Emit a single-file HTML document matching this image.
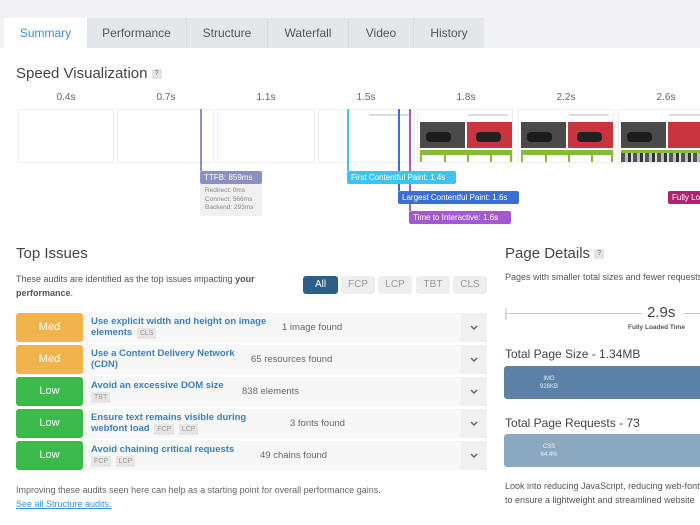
<!DOCTYPE html>
<html><head><meta charset="utf-8"><style>
*{margin:0;padding:0;box-sizing:border-box}
body{width:700px;height:525px;overflow:hidden;background:#fff;font-family:"Liberation Sans",sans-serif;color:#444;position:relative}
.a{position:absolute}
.tabbar{left:0;top:0;width:700px;height:48px;background:#f3f3f5}
.tab{top:18px;height:30px;background:#e4e7ea;font-size:12px;color:#555;text-align:center;line-height:30px;border-right:1px solid #d8dbde}
.frame{top:109px;height:54px;border:1px solid #eee;background:#fff}
.tl{top:92px;font-size:10px;color:#666;transform:translateX(-50%)}
.vl{width:2px}
.lbl{height:13px;font-size:8px;color:#fff;line-height:13px;padding:0 4px;white-space:nowrap;border-radius:2px;overflow:hidden}
.h2{font-size:15px;color:#444}
.btn{top:276px;height:18px;width:34px;background:#eeeeef;font-size:10px;color:#999;text-align:center;line-height:18px;border-radius:3px}
.row{left:16px;width:471px;height:29px;background:#f8f7f8}
.badge{left:0;top:0;width:67px;height:29px;color:#fff;font-size:11px;text-align:center;line-height:29px;border-radius:3px}
.med{background:#f1b44c}.low{background:#3cb94b}
.tt{left:75px;top:3px;font-size:9.5px;font-weight:bold;color:#3a80bd;line-height:11px;width:178px}
.tag{display:inline-block;background:#e6e6e6;color:#999;font-size:7px;font-weight:normal;padding:1px 3px;margin-left:2px;line-height:9px}
.cnt{top:9px;font-size:9.5px;color:#666}
.chev{right:0;top:0;width:26px;height:29px;background:#f1f0f1}
.chev svg{position:absolute;left:9px;top:12px}
.thumb{height:54px;overflow:hidden}
</style></head><body>
<div class="a tabbar"></div>
<div class="a tab" style="left:4px;width:83px;background:#fff;color:#3a8fd0;border:none">Summary</div>
<div class="a tab" style="left:87px;width:100px">Performance</div>
<div class="a tab" style="left:187px;width:81px">Structure</div>
<div class="a tab" style="left:268px;width:81px">Waterfall</div>
<div class="a tab" style="left:349px;width:65px">Video</div>
<div class="a tab" style="left:414px;width:70px;border:none">History</div>

<div class="a" style="left:16px;top:65px;font-size:15px;color:#444">Speed Visualization <span style="display:inline-block;background:#e4e4e4;color:#666;font-size:7px;width:10px;height:10px;line-height:10px;text-align:center;vertical-align:middle">?</span></div>

<div class="a tl" style="left:66px">0.4s</div>
<div class="a tl" style="left:166px">0.7s</div>
<div class="a tl" style="left:266px">1.1s</div>
<div class="a tl" style="left:366px">1.5s</div>
<div class="a tl" style="left:466px">1.8s</div>
<div class="a tl" style="left:566px">2.2s</div>
<div class="a tl" style="left:666px">2.6s</div>

<div class="a frame" style="left:18px;width:96px"></div>
<div class="a frame" style="left:117px;width:97px"></div>
<div class="a frame" style="left:217px;width:98px"></div>
<div class="a frame" style="left:318px;width:97px"><div class="a" style="left:50px;top:4px;width:40px;height:2px;background:#ddd"></div></div>

<div class="a frame thumb" style="left:417px;width:96px">
 <div class="a" style="left:50px;top:4px;width:40px;height:2px;background:#ddd"></div>
 <div class="a" style="left:2px;top:12px;width:45px;height:26px;background:#4a4a4a"></div>
 <div class="a" style="left:49px;top:12px;width:45px;height:26px;background:#c8353f"></div>
 <div class="a" style="left:8px;top:22px;width:25px;height:10px;background:#1c1c1c;border-radius:4px"></div>
 <div class="a" style="left:58px;top:22px;width:25px;height:10px;background:#222;border-radius:4px"></div>
 <div class="a" style="left:2px;top:40px;width:92px;height:5px;background:#86bb3a"></div>
 <div class="a" style="left:2px;top:45px;width:92px;height:8px;border-left:2px solid #86bb3a;border-right:2px solid #86bb3a;background:linear-gradient(90deg,transparent 22px,#86bb3a 22px,#86bb3a 24px,transparent 24px,transparent 45px,#86bb3a 45px,#86bb3a 47px,transparent 47px,transparent 68px,#86bb3a 68px,#86bb3a 70px,transparent 70px)"></div>
</div>
<div class="a frame thumb" style="left:518px;width:96px">
 <div class="a" style="left:50px;top:4px;width:40px;height:2px;background:#ddd"></div>
 <div class="a" style="left:2px;top:12px;width:45px;height:26px;background:#4a4a4a"></div>
 <div class="a" style="left:49px;top:12px;width:45px;height:26px;background:#c8353f"></div>
 <div class="a" style="left:8px;top:22px;width:25px;height:10px;background:#1c1c1c;border-radius:4px"></div>
 <div class="a" style="left:58px;top:22px;width:25px;height:10px;background:#222;border-radius:4px"></div>
 <div class="a" style="left:2px;top:40px;width:92px;height:5px;background:#86bb3a"></div>
 <div class="a" style="left:2px;top:45px;width:92px;height:8px;border-left:2px solid #86bb3a;border-right:2px solid #86bb3a;background:linear-gradient(90deg,transparent 22px,#86bb3a 22px,#86bb3a 24px,transparent 24px,transparent 45px,#86bb3a 45px,#86bb3a 47px,transparent 47px,transparent 68px,#86bb3a 68px,#86bb3a 70px,transparent 70px)"></div>
</div>
<div class="a frame thumb" style="left:618px;width:96px">
 <div class="a" style="left:50px;top:4px;width:40px;height:2px;background:#ddd"></div>
 <div class="a" style="left:2px;top:12px;width:45px;height:26px;background:#4a4a4a"></div>
 <div class="a" style="left:49px;top:12px;width:45px;height:26px;background:#c8353f"></div>
 <div class="a" style="left:8px;top:22px;width:25px;height:10px;background:#1c1c1c;border-radius:4px"></div>
 <div class="a" style="left:2px;top:40px;width:92px;height:3px;background:#86bb3a"></div>
 <div class="a" style="left:2px;top:43px;width:92px;height:10px;background:repeating-linear-gradient(90deg,#555 0 4px,#bbb 4px 7px,#333 7px 10px,#ddd 10px 12px)"></div>
</div>

<div class="a vl" style="left:200px;top:109px;height:62px;background:#8a90c2"></div>
<div class="a vl" style="left:347px;top:109px;height:62px;background:#3ec3f0"></div>
<div class="a vl" style="left:398px;top:109px;height:82px;background:#3a6fd8"></div>
<div class="a vl" style="left:409px;top:109px;height:102px;background:#a658d2"></div>

<div class="a lbl" style="left:200px;top:171px;width:62px;background:#8a90c2">TTFB: 859ms</div>
<div class="a" style="left:200px;top:184px;width:62px;height:32px;background:#f0f0f0;font-size:6.5px;color:#888;line-height:8.5px;padding:3px 5px">Redirect: 0ms<br>Connect: 566ms<br>Backend: 293ms</div>
<div class="a lbl" style="left:347px;top:171px;width:109px;background:#3ec3f0">First Contentful Paint: 1.4s</div>
<div class="a lbl" style="left:398px;top:191px;width:121px;background:#3a6fd8">Largest Contentful Paint: 1.6s</div>
<div class="a lbl" style="left:409px;top:211px;width:102px;background:#a658d2">Time to Interactive: 1.6s</div>
<div class="a lbl" style="left:668px;top:191px;width:40px;background:#b5206e">Fully Loaded</div>

<div class="a h2" style="left:16px;top:245px">Top Issues</div>
<div class="a" style="left:16px;top:272px;font-size:9px;color:#555;line-height:14px;width:260px">These audits are identified as the top issues impacting <b>your performance</b>.</div>
<div class="a btn" style="left:303px;width:35px;background:#2b5f87;color:#fff">All</div>
<div class="a btn" style="left:341px">FCP</div>
<div class="a btn" style="left:378px">LCP</div>
<div class="a btn" style="left:416px">TBT</div>
<div class="a btn" style="left:453px">CLS</div>

<div class="a row" style="top:313px"><div class="a badge med">Med</div><div class="a tt">Use explicit width and height on image elements <span class="tag">CLS</span></div><div class="a cnt" style="left:266px">1 image found</div><div class="a chev"><svg width="8" height="5" viewBox="0 0 8 5"><path d="M1 1L4 4L7 1" stroke="#666" stroke-width="1.5" fill="none"/></svg></div></div>
<div class="a row" style="top:345px"><div class="a badge med">Med</div><div class="a tt" style="width:150px">Use a Content Delivery Network (CDN)</div><div class="a cnt" style="left:235px">65 resources found</div><div class="a chev"><svg width="8" height="5" viewBox="0 0 8 5"><path d="M1 1L4 4L7 1" stroke="#666" stroke-width="1.5" fill="none"/></svg></div></div>
<div class="a row" style="top:377px"><div class="a badge low">Low</div><div class="a tt">Avoid an excessive DOM size<br><span class="tag" style="margin:1px 0 0">TBT</span></div><div class="a cnt" style="left:226px">838 elements</div><div class="a chev"><svg width="8" height="5" viewBox="0 0 8 5"><path d="M1 1L4 4L7 1" stroke="#666" stroke-width="1.5" fill="none"/></svg></div></div>
<div class="a row" style="top:409px"><div class="a badge low">Low</div><div class="a tt">Ensure text remains visible during webfont load <span class="tag">FCP</span> <span class="tag">LCP</span></div><div class="a cnt" style="left:274px">3 fonts found</div><div class="a chev"><svg width="8" height="5" viewBox="0 0 8 5"><path d="M1 1L4 4L7 1" stroke="#666" stroke-width="1.5" fill="none"/></svg></div></div>
<div class="a row" style="top:441px"><div class="a badge low">Low</div><div class="a tt">Avoid chaining critical requests<br><span class="tag" style="margin:1px 0 0">FCP</span> <span class="tag">LCP</span></div><div class="a cnt" style="left:244px">49 chains found</div><div class="a chev"><svg width="8" height="5" viewBox="0 0 8 5"><path d="M1 1L4 4L7 1" stroke="#666" stroke-width="1.5" fill="none"/></svg></div></div>

<div class="a" style="left:16px;top:485px;font-size:9px;color:#666">Improving these audits seen here can help as a starting point for overall performance gains.</div>
<div class="a" style="left:16px;top:499px;font-size:9px;color:#3a8fd0;text-decoration:underline">See all Structure audits.</div>

<div class="a h2" style="left:505px;top:245px">Page Details <span style="display:inline-block;background:#e4e4e4;color:#666;font-size:7px;width:10px;height:10px;line-height:10px;text-align:center;vertical-align:middle">?</span></div>
<div class="a" style="left:505px;top:272px;font-size:9px;color:#555;white-space:nowrap">Pages with smaller total sizes and fewer requests</div>
<div class="a" style="left:505px;top:308px;width:2px;height:12px;background:#ddd"></div>
<div class="a" style="left:505px;top:313px;width:137px;height:1px;background:#ccc"></div>
<div class="a" style="left:647px;top:304px;font-size:15px;color:#444">2.9s</div>
<div class="a" style="left:683px;top:313px;width:20px;height:1px;background:#ccc"></div>
<div class="a" style="left:628px;top:324px;font-size:6.5px;font-weight:bold;color:#555">Fully Loaded Time</div>
<div class="a" style="left:505px;top:347px;font-size:12px;color:#444">Total Page Size - 1.34MB</div>
<div class="a" style="left:504px;top:366px;width:200px;height:33px;background:#5b82a6;border-radius:3px;color:#e8eef5;font-size:6px;text-align:center;line-height:8px;padding-top:9px;padding-right:110px">IMG<br>928KB</div>
<div class="a" style="left:505px;top:416px;font-size:12px;color:#444">Total Page Requests - 73</div>
<div class="a" style="left:504px;top:434px;width:200px;height:33px;background:#8aa8c0;border-radius:3px;color:#eef3f7;font-size:6px;text-align:center;line-height:8px;padding-top:9px;padding-right:110px">CSS<br>64.4%</div>
<div class="a" style="left:505px;top:479px;font-size:9px;color:#555;line-height:14px;white-space:nowrap">Look into reducing JavaScript, reducing web-fonts<br>to ensure a lightweight and streamlined website</div>
</body></html>
